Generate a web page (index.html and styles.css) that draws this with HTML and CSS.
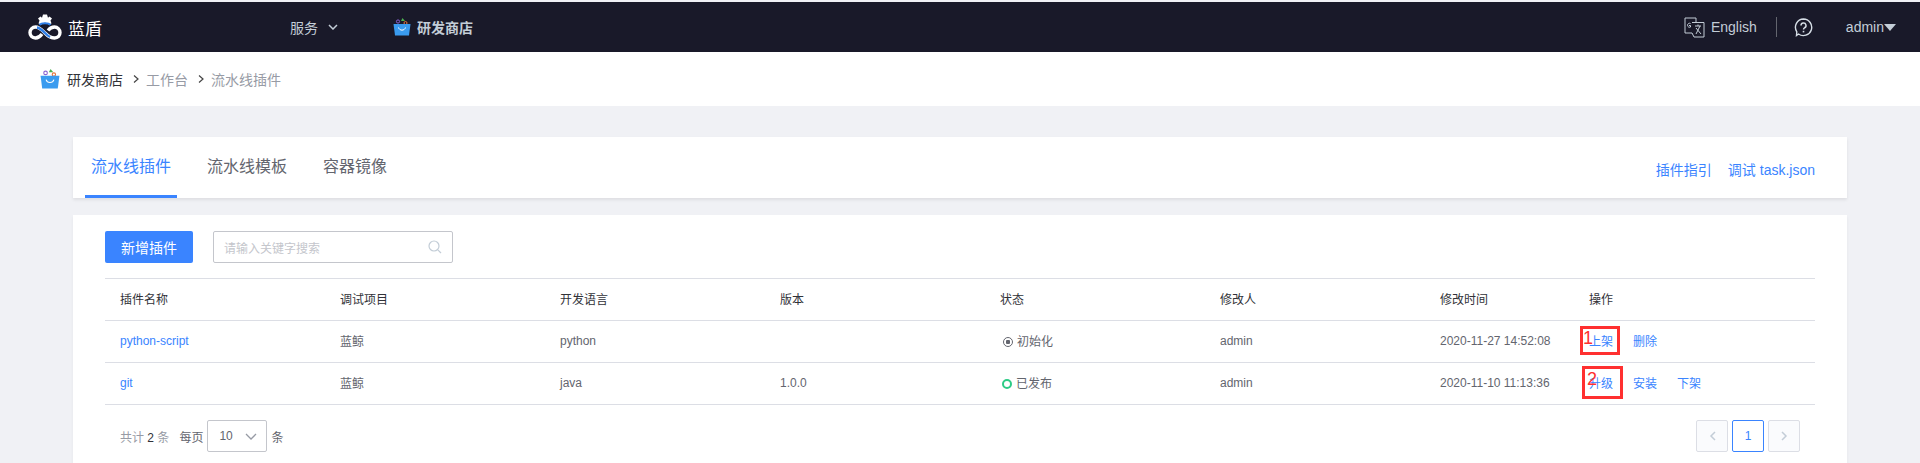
FILE: index.html
```html
<!DOCTYPE html>
<html lang="zh-CN">

<head>
    <meta charset="UTF-8">
    <title>研发商店</title>
    <link rel="stylesheet" href="styles.css">
</head>

<body>
    <!-- 顶部导航 -->
    <header class="top-nav">
        <a class="logo">
            <svg class="logo-icon" width="34" height="29" viewBox="0 0 34 28">
                <path d="M10.500 10 L11.500 7 L10 5 L12.500 3 L14 4.200 L15 1 L19 1 L20 4.200 L21.500 3 L24 5 L22.500 7 L23.500 10 L20.500 11 A4.500 4.500 0 0 0 13.500 11 Z" fill="#fff"/>
                <path d="M14 20.500 C11.500 24 9 24.500 7.500 24.500 C4 24.500 2 22 2 19 C2 16 4.500 13.500 7.500 13.500 C11.500 13.500 14 16.500 17 19.500 C20 22.500 22 24.500 26.500 24.500 C30 24.500 32 22 32 19 C32 16 29.500 13.500 26.500 13.500 C24.500 13.500 22 14.500 20 17" fill="none" stroke="#fff" stroke-width="3.400"/>
                <path d="M9 14 C12 14.500 14 16.500 17 19.500 C18.500 21 20 22.500 22 23.500" fill="none" stroke="#2f7fe8" stroke-width="2.400"/>
                <path d="M11.500 11.500 C13.500 9 20.500 9 22.500 11.500" fill="none" stroke="#2f7fe8" stroke-width="2"/>
            </svg>
            <span class="logo-text">蓝盾</span>
        </a>
        <a class="nav-service">服务
            <svg class="chevron" width="10" height="6" viewBox="0 0 10 6"><path d="M1 1 L5 5 L9 1" fill="none" stroke="#c3cdd7" stroke-width="1.500"/></svg>
        </a>
        <a class="nav-store">
            <svg width="18" height="18" viewBox="0 0 18 18">
                <circle cx="5" cy="3.500" r="1.600" fill="none" stroke="#8a63d2" stroke-width="1"/>
                <path d="M9.500 0 L12 3 L8 3 Z" fill="#4caf50"/>
                <circle cx="12.500" cy="5" r="1.500" fill="none" stroke="#e8743b" stroke-width="1"/>
                <path d="M0.500 6 L17.500 6 L16 17.500 L2 17.500 Z" fill="#3a9bef"/>
                <path d="M5.500 9.500 C6.500 13 11.500 13 12.500 9.500" fill="none" stroke="#fff" stroke-width="1"/>
            </svg>
            <span>研发商店</span>
        </a>
        <div class="nav-right">
            <a class="nav-lang">
                <svg width="21" height="21" viewBox="0 0 21 21">
                    <path d="M1 1 H12 V16 H1 Z" fill="none" stroke="#c3cdd7" stroke-width="1"/>
                    <path d="M8 5.500 H20 V20 H10 L8 16" fill="#1a1a29" stroke="#c3cdd7" stroke-width="1"/>
                    <path d="M6.500 6.500 A2 2 0 1 0 6.500 10 L6.500 8.500 L5 8.500" fill="none" stroke="#c3cdd7" stroke-width="1"/>
                    <path d="M11 9 H17 M14 7.500 V9 M12 17 L16 9 M12 11 L17 17" fill="none" stroke="#c3cdd7" stroke-width="1"/>
                </svg>
                English
            </a>
            <span class="nav-sep"></span>
            <svg class="nav-help" width="19" height="19" viewBox="0 0 19 19">
                <path d="M9.500 1 A8.300 8.300 0 1 1 4.500 16 L2.500 17.500 L2.800 13.800 A8.300 8.300 0 0 1 9.500 1 Z" fill="none" stroke="#d5dde5" stroke-width="1.400"/>
                <path d="M7 7.500 A2.500 2.500 0 1 1 10.500 9.800 C9.700 10.200 9.500 10.700 9.500 11.500" fill="none" stroke="#d5dde5" stroke-width="1.500"/>
                <rect x="8.700" y="12.800" width="1.600" height="1.600" fill="#d5dde5"/>
            </svg>
            <a class="nav-user">admin<i class="caret"></i></a>
        </div>
    </header>

    <!-- 面包屑 -->
    <nav class="crumbs">
        <svg width="20" height="20" viewBox="0 0 18 18">
            <circle cx="5" cy="3.500" r="1.600" fill="none" stroke="#8a63d2" stroke-width="1"/>
            <path d="M9.500 0 L12 3 L8 3 Z" fill="#4caf50"/>
            <circle cx="12.500" cy="5" r="1.500" fill="none" stroke="#e8743b" stroke-width="1"/>
            <path d="M0.500 6 L17.500 6 L16 17.500 L2 17.500 Z" fill="#3a9bef"/>
            <path d="M5.500 9.500 C6.500 13 11.500 13 12.500 9.500" fill="none" stroke="#fff" stroke-width="1"/>
        </svg>
        <span class="crumb-first">研发商店</span>
        <svg class="crumb-arrow" width="6" height="8" viewBox="0 0 6 8"><path d="M1 0.500 L5 4 L1 7.500" fill="none" stroke="#444" stroke-width="1.200"/></svg>
        <span class="crumb-item">工作台</span>
        <svg class="crumb-arrow" width="6" height="8" viewBox="0 0 6 8"><path d="M1 0.500 L5 4 L1 7.500" fill="none" stroke="#444" stroke-width="1.200"/></svg>
        <span class="crumb-item">流水线插件</span>
    </nav>

    <main class="content">
        <!-- 标签页 -->
        <section class="tabs">
            <a class="tab active">流水线插件</a>
            <a class="tab">流水线模板</a>
            <a class="tab">容器镜像</a>
            <div class="tab-links">
                <a>插件指引</a>
                <a>调试 task.json</a>
            </div>
        </section>

        <section class="panel">
            <div class="toolbar">
                <button class="btn-primary" type="button">新增插件</button>
                <div class="search">
                    <span class="search-hint">请输入关键字搜索</span>
                    <svg width="14" height="14" viewBox="0 0 14 14"><circle cx="6" cy="6" r="5" fill="none" stroke="#c3cdd7" stroke-width="1.200"/><path d="M9.800 9.800 L13 13" stroke="#c3cdd7" stroke-width="1.200"/></svg>
                </div>
            </div>

            <table class="atom-table">
                <colgroup>
                    <col class="col-name"><col class="col-w"><col class="col-w"><col class="col-w"><col class="col-w"><col class="col-w"><col class="col-time"><col>
                </colgroup>
                <thead>
                    <tr>
                        <th>插件名称</th>
                        <th>调试项目</th>
                        <th>开发语言</th>
                        <th>版本</th>
                        <th>状态</th>
                        <th>修改人</th>
                        <th>修改时间</th>
                        <th>操作</th>
                    </tr>
                </thead>
                <tbody>
                    <tr>
                        <td><a>python-script</a></td>
                        <td>蓝鲸</td>
                        <td>python</td>
                        <td></td>
                        <td><i class="dot-init"></i>初始化</td>
                        <td>admin</td>
                        <td>2020-11-27 14:52:08</td>
                        <td class="actions"><a>上架</a><a>删除</a></td>
                    </tr>
                    <tr>
                        <td><a>git</a></td>
                        <td>蓝鲸</td>
                        <td>java</td>
                        <td>1.0.0</td>
                        <td><i class="dot-done"></i>已发布</td>
                        <td>admin</td>
                        <td>2020-11-10 11:13:36</td>
                        <td class="actions"><a>升级</a><a>安装</a><a>下架</a></td>
                    </tr>
                </tbody>
            </table>

            <div class="pager">
                <span class="pager-total">共计 <b>2</b> 条</span>
                <span class="pager-size">每页</span>
                <div class="size-select">10
                    <svg width="12" height="7" viewBox="0 0 12 7"><path d="M1 1 L6 6 L11 1" fill="none" stroke="#979ba5" stroke-width="1.300"/></svg>
                </div>
                <span class="pager-size">条</span>
                <div class="pages">
                    <span class="page-btn disabled"><svg width="7" height="10" viewBox="0 0 7 10"><path d="M6 1 L2 5 L6 9" fill="none" stroke="#c3cdd7" stroke-width="1.500"/></svg></span>
                    <span class="page-btn current">1</span>
                    <span class="page-btn disabled"><svg width="7" height="10" viewBox="0 0 7 10"><path d="M1 1 L5 5 L1 9" fill="none" stroke="#c3cdd7" stroke-width="1.500"/></svg></span>
                </div>
            </div>
        </section>
    </main>

    <!-- 截图上的红框标注 -->
    <div class="mark mark-one"><span>1</span></div>
    <div class="mark mark-two"><span>2</span></div>
</body>

</html>
```

FILE: styles.css
```css
html, body {
    height: 463px;
    overflow: hidden;
}

body {
    position: relative;
    margin: 0;
    padding: 2px 0 0;
    box-sizing: border-box;
    font-family: "Liberation Sans", "Noto Sans CJK SC", sans-serif;
    font-size: 12px;
    color: #63656e;
    background-color: #f0f1f5;
}

a {
    color: inherit;
    text-decoration: none;
}

/* top nav */
.top-nav {
    display: flex;
    align-items: center;
    height: 50px;
    background-color: #191929;
    color: #c3cdd7;
}

.logo {
    display: flex;
    align-items: center;
    width: 290px;
    padding-left: 28px;
    box-sizing: border-box;
    color: #fff;
}

.logo-text {
    margin-left: 6px;
    font-size: 17px;
}

.nav-service {
    display: flex;
    align-items: center;
    width: 103px;
    font-size: 14px;
}

.chevron {
    margin-left: 10px;
}

.nav-store {
    display: flex;
    align-items: center;
    gap: 6px;
    font-size: 14px;
    font-weight: bold;
}

.nav-right {
    display: flex;
    align-items: center;
    margin-left: auto;
}

.nav-lang {
    display: flex;
    align-items: center;
    gap: 6px;
    font-size: 14px;
}

.nav-sep {
    width: 1px;
    height: 20px;
    margin: 0 17px 0 19px;
    background-color: #63656e;
}

.nav-user {
    display: flex;
    align-items: center;
    margin: 0 24px 0 33px;
    font-size: 14px;
}

.caret {
    width: 0;
    height: 0;
    border-left: 6px solid transparent;
    border-right: 6px solid transparent;
    border-top: 7px solid #c3cdd7;
}

/* breadcrumb */
.crumbs {
    display: flex;
    align-items: center;
    height: 54px;
    padding-left: 40px;
    background-color: #fff;
    font-size: 14px;
    color: #979ba5;
}

.crumb-first {
    margin-left: 7px;
    color: #313238;
}

.crumb-arrow {
    margin: 0 7px 0 10px;
}

/* content */
.content {
    padding: 31px 73px 0;
}

.tabs {
    display: flex;
    align-items: stretch;
    height: 61px;
    padding: 0 32px 0 12px;
    margin-bottom: 17px;
    background-color: #fff;
    box-shadow: 0 2px 3px rgba(0, 0, 0, .08);
}

.tab {
    display: flex;
    align-items: center;
    box-sizing: border-box;
    padding: 2px 6px 3px;
    margin-right: 24px;
    font-size: 16px;
    line-height: 22px;
    color: #63656e;
}

.tab.active {
    color: #3a84ff;
    border-bottom: 3px solid #3a84ff;
    padding-bottom: 0;
}

.tab-links {
    display: flex;
    align-items: center;
    gap: 16px;
    margin-left: auto;
    padding-top: 2px;
    font-size: 14px;
    color: #3a84ff;
}

.panel {
    box-sizing: border-box;
    height: 248px;
    padding: 16px 32px 0;
    background-color: #fff;
    box-shadow: 0 2px 3px rgba(0, 0, 0, .05);
}

.toolbar {
    display: flex;
    align-items: center;
    gap: 20px;
    height: 32px;
    margin-bottom: 15px;
}

.btn-primary {
    width: 88px;
    height: 32px;
    padding: 0;
    border: none;
    border-radius: 2px;
    font-family: inherit;
    font-size: 14px;
    color: #fff;
    background-color: #3a84ff;
}

.search {
    display: flex;
    align-items: center;
    justify-content: space-between;
    box-sizing: border-box;
    width: 240px;
    height: 32px;
    padding: 0 10px;
    border: 1px solid #c4c6cc;
    border-radius: 2px;
    color: #c4c6cc;
}

/* table */
.atom-table {
    width: 1710px;
    table-layout: fixed;
    border-collapse: collapse;
    border-top: 1px solid #dcdee5;
}

.col-name {
    width: 220px;
}

.col-w {
    width: 220px;
}

.col-time {
    width: 149px;
}

.atom-table th,
.atom-table td {
    height: 42px;
    padding: 0 0 2px 15px;
    box-sizing: border-box;
    border-bottom: 1px solid #dcdee5;
    font-weight: normal;
    text-align: left;
}

.atom-table th {
    color: #313238;
}

.atom-table td a {
    color: #3a84ff;
}

.actions a {
    margin-right: 20px;
}

.dot-init,
.dot-done {
    display: inline-block;
    box-sizing: border-box;
    width: 10px;
    height: 10px;
    margin-right: 4px;
    border-radius: 50%;
    vertical-align: -1px;
}

.dot-init {
    margin-left: 3px;
    border: 1px solid #63656e;
    background: radial-gradient(circle, #63656e 0 2px, transparent 2.500px);
}

.dot-done {
    margin-left: 2px;
    border: 2px solid #2dcb86;
}

/* pagination */
.pager {
    display: flex;
    align-items: center;
    height: 32px;
    margin-top: 15px;
    padding: 0 15px;
}

.pager-total {
    margin-right: 10px;
    color: #979ba5;
}

.pager-total b {
    font-weight: normal;
    color: #313238;
}

.size-select {
    display: flex;
    align-items: center;
    justify-content: space-between;
    box-sizing: border-box;
    width: 60px;
    height: 32px;
    margin: 0 4px;
    padding: 0 9px 0 11px;
    border: 1px solid #c4c6cc;
    border-radius: 2px;
}

.pages {
    display: flex;
    gap: 4px;
    margin-left: auto;
}

.page-btn {
    display: flex;
    align-items: center;
    justify-content: center;
    box-sizing: border-box;
    width: 32px;
    height: 32px;
    border: 1px solid #dcdee5;
    border-radius: 2px;
}

.page-btn.disabled {
    background-color: #fafbfd;
}

.page-btn.current {
    border-color: #3a84ff;
    color: #3a84ff;
}

/* annotations */
.mark {
    position: absolute;
    box-sizing: border-box;
    border: 3px solid #ff3030;
    color: #ff3030;
    font-size: 18px;
    line-height: 18px;
}

.mark span {
    position: absolute;
    top: 0;
    left: 0;
}

.mark-one {
    left: 1580px;
    top: 326px;
    width: 40px;
    height: 29px;
}

.mark-two {
    left: 1582px;
    top: 366px;
    width: 41px;
    height: 33px;
}

.mark-two span {
    top: 1px;
    left: 2px;
}
```
